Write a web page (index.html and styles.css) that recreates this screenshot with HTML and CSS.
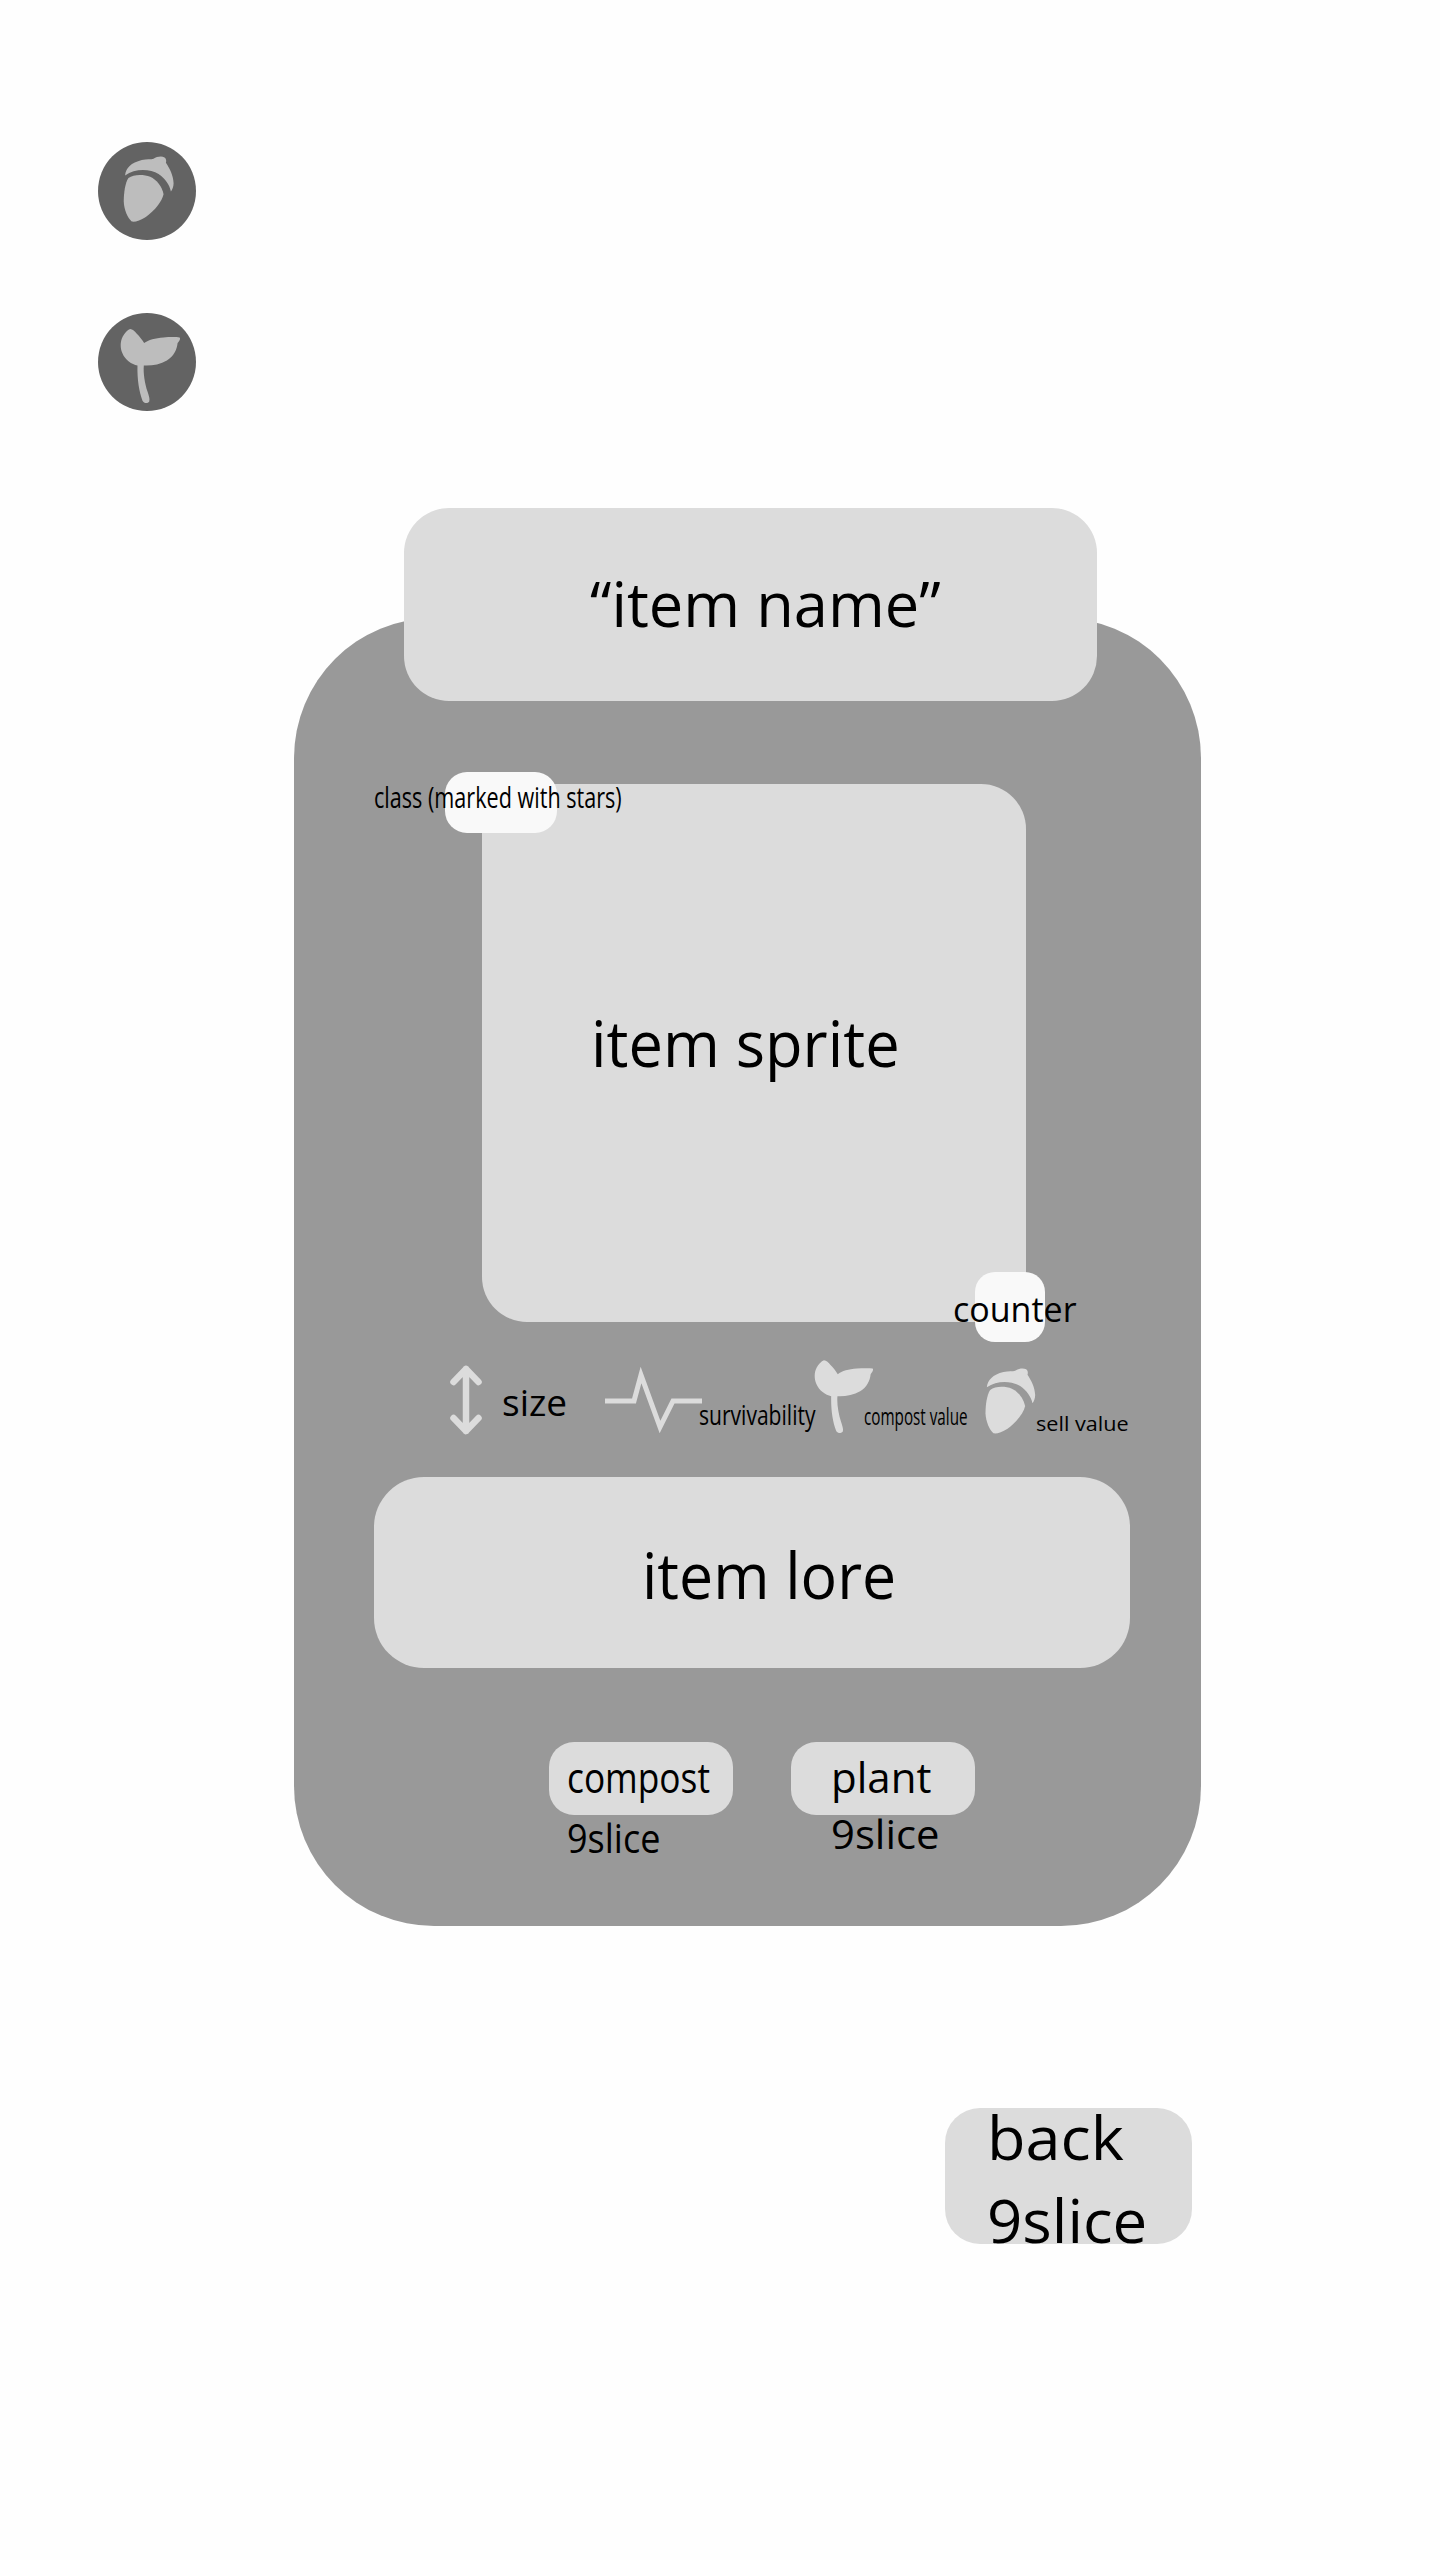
FILE: index.html
```html
<!DOCTYPE html>
<html lang="en">
<head>
<meta charset="utf-8">
<title>Item card wireframe</title>
<link rel="stylesheet" href="styles.css">
</head>
<body>
<main class="page">
  <div class="badges">
    <svg class="badge" viewBox="54 67 293 293">
      <circle class="badge-bg" cx="200.5" cy="213.5" r="146.5"/>
      <g transform="translate(85 55)">
        <path class="badge-icon" d="M50 112C52 90 68 74 100 66C115 62 128 65 135 62C145 55 160 53 168 58C173 62 174 68 172 74C184 92 194 112 195 135C195 145 191 154 187 160C183 140 170 122 150 108C125 92 80 90 50 112Z"/>
        <path class="badge-icon" d="M60 120C75 108 105 108 125 116C145 125 160 145 165 168C160 190 140 215 112 236C95 247 80 252 70 250C58 240 47 215 46 190C46 165 50 135 60 120Z"/>
      </g>
    </svg>
    <svg class="badge" viewBox="54 580 293 293">
      <circle class="badge-bg" cx="200.5" cy="726.500" r="146.5"/>
      <path class="badge-icon" d="M150 628C158 628 164 636 170 642C178 650 186 660 192 670C205 660 225 655 250 653C265 652 285 651 298 653C302 658 296 664 292 670C290 690 280 710 260 722C240 734 215 738 191 737C189 760 194 790 202 815C206 828 210 838 207 845C202 851 192 851 187 842C177 815 171 780 172 737C155 733 135 720 127 700C120 685 120 665 128 650C134 640 142 630 150 628Z"/>
    </svg>
  </div>

  <header class="title-panel"><span class="txt title-text">“item name”</span></header>

  <section class="card">
    <div class="sprite">
      <span class="txt sprite-text">item sprite</span>
      <div class="class-pill"><span class="txt class-text">class (marked with stars)</span></div>
      <div class="counter-pill"><span class="txt counter-text">counter</span></div>
    </div>

    <div class="stats">
      <svg class="arrow" viewBox="0 0 32 70">
        <path class="line" d="M16 4V66M3.500 17L16 4L28.500 17M3.500 53L16 66L28.500 53"/>
      </svg>
      <span class="txt size-text">size</span>
      <svg class="pulse" viewBox="605 1365 97 70">
        <polyline class="line thin" points="605,1401 634,1401 641,1375 660,1427 673,1401 702,1401"/>
      </svg>
      <span class="txt surv-text">survivability</span>
      <svg class="sprout" viewBox="120 627 182 222">
        <path class="stat-icon" d="M150 628C158 628 164 636 170 642C178 650 186 660 192 670C205 660 225 655 250 653C265 652 285 651 298 653C302 658 296 664 292 670C290 690 280 710 260 722C240 734 215 738 191 737C189 760 194 790 202 815C206 828 210 838 207 845C202 851 192 851 187 842C177 815 171 780 172 737C155 733 135 720 127 700C120 685 120 665 128 650C134 640 142 630 150 628Z"/>
      </svg>
      <span class="txt compost-value">compost value</span>
      <svg class="acorn" viewBox="45 54 152 198">
        <path class="stat-icon" d="M50 112C52 90 68 74 100 66C115 62 128 65 135 62C145 55 160 53 168 58C173 62 174 68 172 74C184 92 194 112 195 135C195 145 191 154 187 160C183 140 170 122 150 108C125 92 80 90 50 112Z"/>
        <path class="stat-icon" d="M60 120C75 108 105 108 125 116C145 125 160 145 165 168C160 190 140 215 112 236C95 247 80 252 70 250C58 240 47 215 46 190C46 165 50 135 60 120Z"/>
      </svg>
      <span class="txt sell-value">sell value</span>
    </div>

    <div class="lore"><span class="txt lore-text">item lore</span></div>

    <div class="actions">
      <div class="action">
        <div class="action-btn"><span class="txt compost-text">compost</span></div>
        <span class="txt slice-left">9slice</span>
      </div>
      <div class="action">
        <div class="action-btn"><span class="txt plant-text">plant</span></div>
        <span class="txt slice-right">9slice</span>
      </div>
    </div>
  </section>

  <div class="back">
    <span class="txt back-text">back</span>
    <span class="txt back-slice">9slice</span>
  </div>
</main>
</body>
</html>
```

FILE: styles.css
```css
html, body {
  margin: 0;
  background: #fefefe;
}

.page {
  display: flex;
  flex-direction: column;
  align-items: flex-start;
  box-sizing: border-box;
  min-height: 2560px;
  padding-top: 142px;
  font-family: "Open Sans", "Noto Sans", sans-serif;
  color: #000;
}

.txt {
  display: block;
  min-width: 0;
  line-height: 1;
  white-space: nowrap;
  transform-origin: left center;
}

/* side badges */
.badges {
  display: flex;
  flex-direction: column;
  gap: 73px;
  margin-left: 98px;
}
.badge { display: block; width: 98px; height: 98px; }
.badge-bg { fill: #636363; }
.badge-icon { fill: #bdbdbd; }

/* title */
.title-panel {
  position: relative;
  z-index: 1;
  box-sizing: border-box;
  width: 693px;
  height: 193px;
  margin: 97px 0 0 404px;
  padding: 63px 0 0 186px;
  background: #dcdcdc;
  border-radius: 45px;
}
.title-text { font-size: 63px; transform: scaleX(.975); }

/* card */
.card {
  display: flex;
  flex-direction: column;
  align-items: flex-start;
  box-sizing: border-box;
  width: 907px;
  height: 1308px;
  margin: -83px 0 0 294px;
  padding-top: 166px;
  background: #999;
  border-radius: 140px;
}

.sprite {
  position: relative;
  box-sizing: border-box;
  width: 544px;
  height: 538px;
  margin-left: 188px;
  padding: 227px 0 0 109px;
  background: #dcdcdc;
  border-radius: 45px;
}
.sprite-text { font-size: 64px; transform: scaleX(.96); }

.class-pill {
  position: absolute;
  left: -37px;
  top: -12px;
  box-sizing: border-box;
  width: 112px;
  height: 61px;
  padding-top: 10px;
  background: #f9f9f9;
  border-radius: 22px;
}
.class-text {
  margin-left: -71px;
  font-size: 30px;
  transform: scaleX(.72);
}

.counter-pill {
  position: absolute;
  left: 493px;
  top: 488px;
  box-sizing: border-box;
  width: 70px;
  height: 70px;
  padding-top: 20px;
  background: #f9f9f9;
  border-radius: 20px;
}
.counter-text { margin-left: -22px; font-size: 34px; }

/* stats */
.stats {
  display: flex;
  align-items: flex-start;
  height: 156px;
  margin-left: 156px;
}
.line {
  fill: none;
  stroke: #dcdcdc;
  stroke-width: 6.500;
  stroke-linecap: round;
  stroke-linejoin: round;
}
.line.thin { stroke-width: 5; stroke-linecap: butt; stroke-linejoin: miter; }
.stat-icon { fill: #dcdcdc; }

.arrow { flex: 0 0 32px; height: 70px; margin-top: 43px; }
.size-text { flex: 0 0 103px; margin: 61px 0 0 20px; font-size: 37px; }
.pulse { flex: 0 0 97px; height: 70px; margin-top: 43px; }
.surv-text {
  flex: 0 0 115px;
  margin: 79px 0 0 -3px;
  font-size: 27px;
  transform: scaleX(.78);
}
.sprout { flex: 0 0 60px; height: 73px; margin-top: 38px; }
.compost-value {
  flex: 0 0 123px;
  margin: 82px 0 0 -10px;
  font-size: 24px;
  transform: scaleX(.635);
}
.acorn { flex: 0 0 51px; height: 66px; margin: 46px 0 0 -2px; }
.sell-value { margin-top: 92px; font-size: 20px; transform: scaleX(1.08); }

/* lore */
.lore {
  box-sizing: border-box;
  width: 756px;
  height: 191px;
  margin: -1px 0 0 80px;
  padding: 66px 0 0 268px;
  background: #dcdcdc;
  border-radius: 50px;
}
.lore-text { font-size: 64px; transform: scaleX(.95); }

/* actions */
.actions {
  display: flex;
  gap: 58px;
  margin: 74px 0 0 255px;
}
.action { width: 184px; }
.action-btn {
  box-sizing: border-box;
  height: 73px;
  padding-top: 14px;
  background: #dcdcdc;
  border-radius: 25px;
}
.compost-text { margin-left: 18px; font-size: 42px; transform: scaleX(.84); }
.plant-text { margin-left: 40px; font-size: 42px; }
.slice-left { margin: 3px 0 0 18px; font-size: 40px; transform: scaleX(.9); }
.slice-right { margin: -2px 0 0 40px; font-size: 41px; transform: scaleX(1.02); }

/* back */
.back {
  box-sizing: border-box;
  width: 247px;
  height: 136px;
  margin: 182px 0 0 945px;
  padding-left: 42px;
  background: #dcdcdc;
  border-radius: 35px;
}
.back-text { margin-top: -1px; font-size: 60px; transform: scaleX(1.05); }
.back-slice { margin-top: 23px; font-size: 60px; transform: scaleX(1.03); }
```
